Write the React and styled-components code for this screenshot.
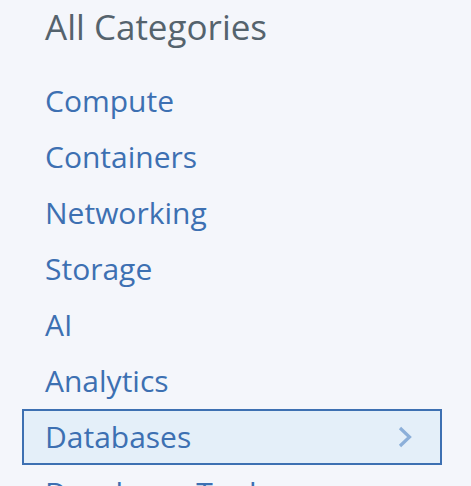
import React from "react";
import styled, { createGlobalStyle } from "styled-components";

const GlobalStyle = createGlobalStyle`
  html, body {
    margin: 0;
    padding: 0;
    background: #f4f6fb;
  }
  body {
    font-family: "Open Sans", "Noto Sans", sans-serif;
  }
`;

const categories = [
  "Compute",
  "Containers",
  "Networking",
  "Storage",
  "AI",
  "Analytics",
  "Databases",
  "Developer Tools",
];

const App = () => {
  return (
    <>
      <GlobalStyle />
      <StSidebar>
        <StTitle>All Categories</StTitle>
        <StList>
          {categories.map((name) => (
            <StItem key={name} $active={name === "Databases"}>
              <span>{name}</span>
              {name === "Databases" && (
                <svg width="16" height="24" viewBox="0 0 16 24">
                  <path
                    d="M3 3 L12.5 12 L3 21"
                    fill="none"
                    stroke="#8cafd9"
                    strokeWidth="3.2"
                  />
                </svg>
              )}
            </StItem>
          ))}
        </StList>
      </StSidebar>
    </>
  );
};

export default App;

const StSidebar = styled.div`
  display: flex;
  flex-direction: column;
  width: 471px;
  height: 486px;
  overflow: hidden;
  background: #f4f6fb;
`;

const StTitle = styled.div`
  flex-shrink: 0;
  height: 73px;
  padding: 7px 0 0 45px;
  box-sizing: border-box;
  color: #55636d;
  font-size: 35px;
  line-height: 40px;
`;

const StList = styled.div`
  display: flex;
  flex-direction: column;
  flex-shrink: 0;
  padding-left: 22px;
  width: 420px;
`;

const StItem = styled.div`
  display: flex;
  align-items: center;
  justify-content: space-between;
  flex-shrink: 0;
  height: 56px;
  box-sizing: border-box;
  padding: 0 27px 0 21px;
  border: 2px solid ${(p) => (p.$active ? "#3d70b2" : "transparent")};
  background: ${(p) => (p.$active ? "#e4eff9" : "transparent")};
  color: #3d70b2;
  font-size: 30px;
  line-height: 40px;

  svg {
    display: block;
  }
`;
